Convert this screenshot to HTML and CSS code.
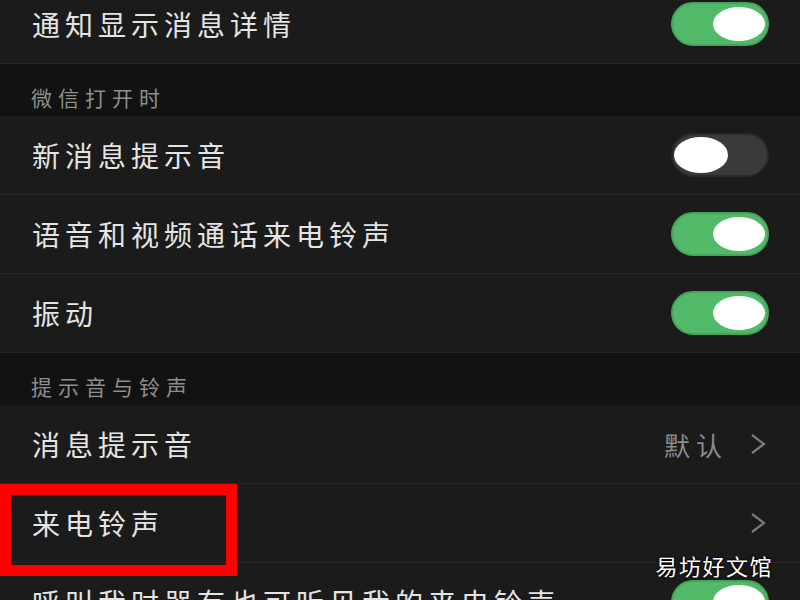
FILE: index.html
```html
<!DOCTYPE html>
<html lang="zh-CN">
<head>
    <meta charset="UTF-8">
    <meta name="viewport" content="width=device-width, initial-scale=1.0">
    <title>新消息通知</title>
    <link rel="stylesheet" href="styles.css">
</head>
<body>
    <div class="settings">
        <div class="row">
            <span class="label">通知显示消息详情</span>
            <div class="switch on"><span class="knob"></span></div>
        </div>

        <div class="section">微信打开时</div>
        <div class="row">
            <span class="label">新消息提示音</span>
            <div class="switch"><span class="knob"></span></div>
        </div>
        <div class="row">
            <span class="label">语音和视频通话来电铃声</span>
            <div class="switch on"><span class="knob"></span></div>
        </div>
        <div class="row">
            <span class="label">振动</span>
            <div class="switch on"><span class="knob"></span></div>
        </div>

        <div class="section">提示音与铃声</div>
        <div class="row">
            <span class="label">消息提示音</span>
            <div class="link">
                <span class="value">默认</span>
                <svg class="chevron" viewBox="0 0 16 22" width="16" height="22">
                    <path d="M2 2 L14 11 L2 20" fill="none" stroke="#7a7a7a" stroke-width="2.2"/>
                </svg>
            </div>
        </div>
        <div class="row">
            <span class="label">来电铃声</span>
            <div class="link">
                <svg class="chevron" viewBox="0 0 16 22" width="16" height="22">
                    <path d="M2 2 L14 11 L2 20" fill="none" stroke="#7a7a7a" stroke-width="2.2"/>
                </svg>
            </div>
            <div class="mark"></div>
        </div>
        <div class="row">
            <span class="label">呼叫我时器有也可听见我的来电铃声</span>
            <div class="switch on"><span class="knob"></span></div>
        </div>
    </div>

    <div class="watermark">易坊好文馆</div>
</body>
</html>
```

FILE: styles.css
```css
* {
    margin: 0;
    padding: 0;
    box-sizing: border-box;
}
body {
    width: 800px;
    height: 600px;
    overflow: hidden;
    position: relative;
    background: #121212;
    font-family: "Noto Sans CJK SC", "Noto Sans", sans-serif;
    color: #e4e4e4;
}
.settings {
    margin-top: -15px;
}
.row {
    position: relative;
    height: 79px;
    display: flex;
    align-items: center;
    justify-content: space-between;
    padding: 0 31px 0 32px;
    background: #1b1b1b;
    border-bottom: 1px solid #262626;
}
.label {
    font-size: 28px;
    letter-spacing: 5px;
    white-space: nowrap;
}
.section {
    height: 52px;
    display: flex;
    align-items: flex-end;
    padding: 0 0 4px 31px;
    font-size: 21px;
    letter-spacing: 6px;
    color: #8e8e8e;
    background: #121212;
}
.switch {
    position: relative;
    width: 98px;
    height: 44px;
    border-radius: 22px;
    background: #3a3a3a;
    border: 2px solid #2a2a2a;
    flex-shrink: 0;
}
.switch .knob {
    position: absolute;
    top: 2px;
    left: 1px;
    width: 54px;
    height: 36px;
    border-radius: 50%;
    background: #fff;
}
.switch.on {
    background: #51b968;
    border-color: #46a35b;
}
.switch.on .knob {
    left: auto;
    right: 2px;
    top: 3px;
    width: 52px;
    height: 34px;
}
.link {
    display: flex;
    align-items: center;
    gap: 22px;
    padding-right: 3px;
}
.value {
    font-size: 26px;
    letter-spacing: 6px;
    color: #8a8a8a;
}
.mark {
    position: absolute;
    z-index: 2;
    left: 0;
    top: 0;
    width: 237px;
    height: 92px;
    border: 11px solid #ff0000;
}
.watermark {
    position: absolute;
    z-index: 3;
    right: 27px;
    top: 549px;
    font-size: 22px;
    letter-spacing: 1.5px;
    color: #fff;
    text-shadow: 0 0 3px #000, 0 0 2px #000;
}
```
